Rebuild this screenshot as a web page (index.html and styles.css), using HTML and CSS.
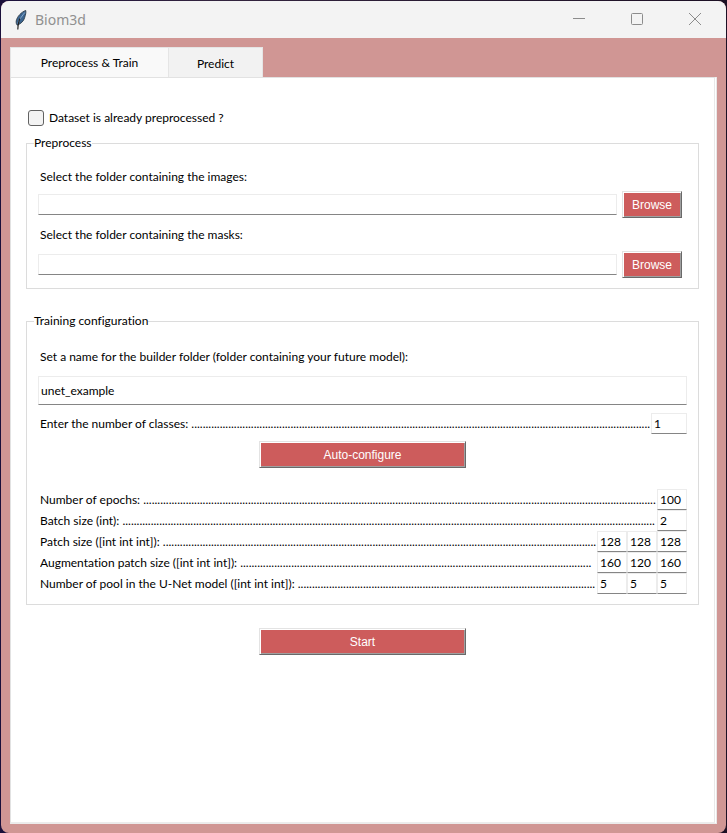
FILE: index.html
```html
<!DOCTYPE html>
<html lang="en">
<head>
<meta charset="utf-8">
<title>Biom3d</title>
<link rel="stylesheet" href="styles.css">
</head>
<body>
<div class="window">
  <header class="titlebar">
    <svg class="feather" width="12" height="20" viewBox="0 0 12 20" aria-hidden="true">
      <path d="M10.700 .4C6.500 2 2 6.500 1.200 11c-.2 1.800.2 3.200 1 4.200C5.500 14 9 11 9.700 7.500 10.400 5 11.300 2.500 10.700.4Z" fill="#3c6590" stroke="#26343f" stroke-width=".8"/>
      <path d="M9.800 2.500C7.500 5.500 4.500 9 2.800 13.500" fill="none" stroke="#86a9cc" stroke-width="1"/>
      <path d="M5 8.500C3.500 11.500 3 15 2.800 19.500" fill="none" stroke="#222" stroke-width="1.200"/>
    </svg>
    <h1 class="title">Biom3d</h1>
    <div class="controls">
      <button class="control" type="button" aria-label="Minimize"><svg width="14" height="14" viewBox="0 0 14 14"><path d="M1 6.500h12"/></svg></button>
      <button class="control" type="button" aria-label="Maximize"><svg width="14" height="14" viewBox="0 0 14 14"><rect x="1.500" y="1.500" width="11" height="11" rx="1"/></svg></button>
      <button class="control" type="button" aria-label="Close"><svg width="14" height="14" viewBox="0 0 14 14"><path d="M1 1l12 12M13 1L1 13"/></svg></button>
    </div>
  </header>
  <main class="notebook">
    <div class="tabs" role="tablist">
      <button class="tab tab-active" type="button" role="tab" aria-selected="true">Preprocess &amp; Train</button>
      <button class="tab" type="button" role="tab" aria-selected="false">Predict</button>
    </div>
    <form class="panel">
      <div class="check-row">
        <input class="check" type="checkbox" id="done"><label for="done">Dataset is already preprocessed ?</label>
      </div>
      <fieldset class="group group-preprocess">
        <legend>Preprocess</legend>
        <label class="label" for="images">Select the folder containing the images:</label>
        <div class="browse-row"><input class="entry" type="text" id="images"><button class="button" type="button">Browse</button></div>
        <label class="label" for="masks">Select the folder containing the masks:</label>
        <div class="browse-row"><input class="entry" type="text" id="masks"><button class="button" type="button">Browse</button></div>
      </fieldset>
      <fieldset class="group group-training">
        <legend>Training configuration</legend>
        <label class="label" for="name">Set a name for the builder folder (folder containing your future model):</label>
        <input class="entry entry-name" type="text" id="name" value="unet_example">
        <div class="row"><label class="leader" for="classes">Enter the number of classes: ..................................................................................................................................................................</label><input class="entry num num-wide" type="text" id="classes" value="1"></div>
        <button class="button button-wide button-auto" type="button">Auto-configure</button>
        <div class="row"><label class="leader" for="epochs">Number of epochs: .....................................................................................................................................................................................</label><input class="entry num" type="text" id="epochs" value="100"></div>
        <div class="row"><label class="leader" for="batch">Batch size (int): ............................................................................................................................................................................................</label><input class="entry num" type="text" id="batch" value="2"></div>
        <div class="row"><label class="leader" for="patch">Patch size ([int int int]): .........................................................................................................................................................</label><input class="entry num" type="text" id="patch" value="128"><input class="entry num" type="text" aria-label="Patch size 2" value="128"><input class="entry num" type="text" aria-label="Patch size 3" value="128"></div>
        <div class="row"><label class="leader" for="aug">Augmentation patch size ([int int int]): ............................................................................................................................</label><input class="entry num" type="text" id="aug" value="160"><input class="entry num" type="text" aria-label="Augmentation patch size 2" value="120"><input class="entry num" type="text" aria-label="Augmentation patch size 3" value="160"></div>
        <div class="row"><label class="leader" for="pool">Number of pool in the U-Net model ([int int int]): .........................................................................................................</label><input class="entry num" type="text" id="pool" value="5"><input class="entry num" type="text" aria-label="Number of pool 2" value="5"><input class="entry num" type="text" aria-label="Number of pool 3" value="5"></div>
      </fieldset>
      <button class="button button-wide" type="button">Start</button>
    </form>
  </main>
</div>
</body>
</html>
```
FILE: styles.css
```css
* { box-sizing: border-box; }

body {
  margin: 0;
  padding: 1px 1px 0;
  background: linear-gradient(90deg, #1a0f3a, #33243f 30%, #1c1024);
  color: #000;
  font: 12px/16px Lato, sans-serif;
  font-variant-ligatures: none;
}

button, input { font: inherit; color: inherit; margin: 0; border-radius: 0; }

.window {
  display: flex;
  flex-direction: column;
  min-height: calc(100vh - 1px);
  border-radius: 8px;
  overflow: hidden;
  background: #d09694;
}

.titlebar {
  display: flex;
  align-items: center;
  height: 37px;
  padding: 0 2px 0 14px;
  background: #f3f3f3;
}

.title {
  flex: 1;
  margin: 0 0 0 8px;
  color: #909090;
  font-family: "Noto Sans", sans-serif;
  font-size: 14px;
  font-weight: 400;
  line-height: 20px;
}

.controls { display: flex; align-self: flex-start; }

.control {
  display: grid;
  place-items: center;
  width: 58px;
  height: 36px;
  padding: 0;
  border: 0;
  background: none;
}

.control svg { fill: none; stroke: #8c8c8c; }

.notebook {
  display: flex;
  flex: 1;
  flex-direction: column;
  padding: 9px 9px;
}

.tabs { display: flex; height: 30px; }

.tab {
  width: 94px;
  padding: 2px 0 0;
  border: 1px solid #e5e5e5;
  border-width: 1px 1px 0 0;
  background: #f2f2f2;
}

.tab-active {
  width: 159px;
  padding-top: 0;
  border-left-width: 1px;
  background: #f9f9f9;
}

.panel {
  flex: 1;
  padding: 32px 15px 0;
  border: 1px solid #e2e2e2;
  border-right: 3px double #e8e8e8;
  border-bottom: 2px solid #ececec;
  background: #fff;
}

.check-row { display: flex; align-items: center; gap: 5px; padding-left: 2px; }

.check {
  appearance: none;
  width: 16px;
  height: 16px;
  border: 1px solid #626262;
  border-radius: 3px;
  background: #f3f3f3;
}

.group {
  display: flex;
  flex-direction: column;
  min-width: 0;
  margin: 9px 0 0;
  padding: 18px 11px 10px;
  border: 1px solid #dcdcdc;
}

.group legend { margin-left: -4px; padding: 0; }

.group-training { margin: 24px 0 23px; padding-top: 20px; }

.label { padding-left: 2px; }

.browse-row {
  display: flex;
  align-items: center;
  gap: 5px;
  margin: 6px 0 9px;
  padding-right: 5px;
}

.browse-row:last-child { margin: 8px 0 0; }

.entry {
  flex: 1;
  min-width: 0;
  height: 21px;
  padding: 0 2px;
  border: 1px solid #ececec;
  border-bottom-color: #858585;
  background: #fff;
}

.entry-name { flex: none; height: 29px; margin: 11px 0 8px; }

.row { display: flex; }

.leader {
  flex: 1;
  min-width: 0;
  padding-top: 3px;
  margin-left: 2px;
  overflow: hidden;
  white-space: nowrap;
}

.num { flex: none; width: 30px; }

.num-wide { width: 36px; }

.button {
  width: 60px;
  height: 27px;
  padding: 0;
  border: 1px solid;
  border-color: #e3e3e3 #696969 #696969 #e3e3e3;
  background: #cd5c5c;
  box-shadow: inset 1px 1px #fff, inset -1px -1px #a0a0a0;
  color: #fff;
  font: 12px/16px "Liberation Sans", sans-serif;
}

.button-wide { display: block; width: 207px; margin: 0 auto; }

.button-auto { margin: 7px auto 21px; }
```
